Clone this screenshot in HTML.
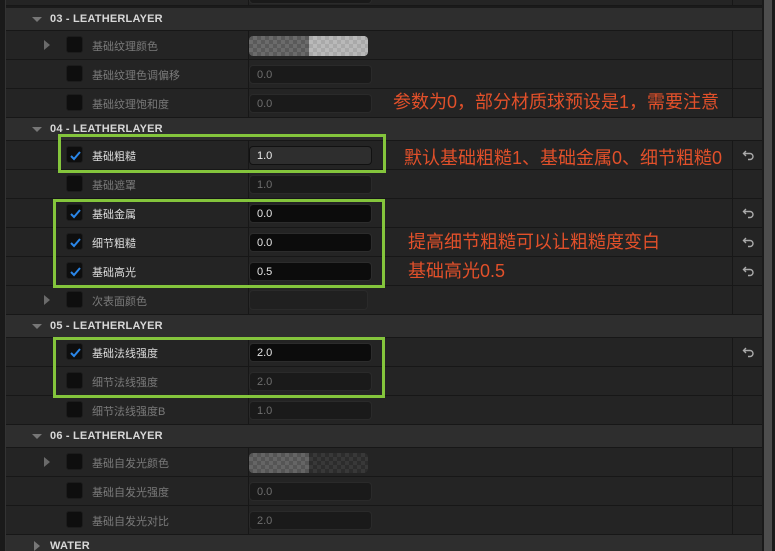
<!DOCTYPE html>
<html><head><meta charset="utf-8"><style>
*{margin:0;padding:0;box-sizing:border-box}
html,body{width:775px;height:551px;overflow:hidden}
body{background:#1a1a1a;position:relative;font-family:"Liberation Sans","Noto Sans CJK SC",sans-serif}
.a{position:absolute}
.row{position:absolute;left:6px;width:756px;height:29px;background:#242424;border-bottom:1px solid #171717}
.row .vd{position:absolute;left:242px;top:0;width:1px;height:100%;background:#171717}
.row .rd{position:absolute;left:726px;top:0;width:1px;height:100%;background:#171717}
.hdr{position:absolute;left:6px;width:756px;background:#2e2e2e;border-bottom:1px solid #171717;color:#d8d8d8;font-weight:bold;font-size:11px;letter-spacing:0.2px}
.hdr .t{position:absolute;left:44px;top:50%;transform:translateY(-50%)}
.tri{position:absolute;left:26px;top:50%;margin-top:-2px;width:0;height:0;border-left:5px solid transparent;border-right:5px solid transparent;border-top:5px solid #777}
.tr{position:absolute;left:38px;top:9px;width:0;height:0;border-top:5px solid transparent;border-bottom:5px solid transparent;border-left:6px solid #6a6a6a}
.cb{position:absolute;left:60px;top:5px;width:17px;height:17px;background:#0e0e0e;border-radius:3px;border:1px solid #1c1c1c}
.cb svg{position:absolute;left:2px;top:2px}
.lb{position:absolute;left:86px;top:7px;font-size:11px;color:#7a7a7a}
.lb.on{color:#dcdcdc}
.in{position:absolute;left:243px;top:5px;width:123px;height:19px;border-radius:4px;background:#1a1a1a;border:1px solid #2a2a2a;color:#6e6e6e;font-size:11px;padding:3px 0 0 7px}
.in.on{background:#0c0c0c;color:#e6e6e6;border-color:#2c2c2c}
.in.sel{background:#2e2e2e;border:1px solid #111;color:#eee}
.chk{position:absolute;left:243px;top:4px;width:120px;height:20px;border-radius:4px;overflow:hidden}
.undo{position:absolute;left:736px;top:8px}
.g{position:absolute;border:3px solid #84c53c}
.note{position:absolute;color:#e2502a;font-size:18px;font-family:"Liberation Sans","Noto Sans CJK SC",sans-serif;white-space:nowrap}
</style></head><body>
<div class="a" style="left:5px;top:0;width:1px;height:551px;background:#333"></div>
<div class="a" style="left:764px;top:0;width:8px;height:551px;background:#4d4d4d"></div>

<div class="row" style="top:-23px"><div class="vd"></div><div class="rd"></div><div class="in" style="left:243px;top:17px;height:10px"></div></div>

<div class="hdr" style="top:8px;height:23px"><div class="tri"></div><div class="t">03 - LEATHERLAYER</div></div>
<div class="row" style="top:31px"><div class="vd"></div><div class="rd"></div><div class="tr"></div><div class="cb"></div><div class="lb">基础纹理颜色</div>
<div class="chk" style="left:243px;top:5px;width:119px">
<div class="a" style="left:0;top:0;width:60px;height:20px;background-color:#5a5a5a;background-image:linear-gradient(45deg,#6b6b6b 25%,transparent 25%,transparent 75%,#6b6b6b 75%),linear-gradient(45deg,#6b6b6b 25%,transparent 25%,transparent 75%,#6b6b6b 75%);background-size:8px 8px;background-position:0 0,4px 4px"></div>
<div class="a" style="left:60px;top:0;width:60px;height:20px;background-color:#a9a9a9;background-image:linear-gradient(45deg,#b9b9b9 25%,transparent 25%,transparent 75%,#b9b9b9 75%),linear-gradient(45deg,#b9b9b9 25%,transparent 25%,transparent 75%,#b9b9b9 75%);background-size:8px 8px;background-position:0 0,4px 4px"></div>
</div></div>
<div class="row" style="top:60px"><div class="vd"></div><div class="rd"></div><div class="cb"></div><div class="lb">基础纹理色调偏移</div><div class="in">0.0</div></div>
<div class="row" style="top:89px"><div class="vd"></div><div class="rd"></div><div class="cb"></div><div class="lb">基础纹理饱和度</div><div class="in">0.0</div></div>

<div class="hdr" style="top:118px;height:23px"><div class="tri"></div><div class="t">04 - LEATHERLAYER</div></div>
<div class="row" style="top:141px"><div class="vd"></div><div class="rd"></div><div class="cb"><svg width="13" height="13" viewBox="0 0 13 13"><path d="M2 7l3 3 6-7" stroke="#2a86e8" stroke-width="2" fill="none"/></svg></div><div class="lb on">基础粗糙</div><div class="in sel">1.0</div><svg class="undo" width="14" height="12" viewBox="0 0 14 12"><path d="M4 2L1.5 4.5 4 7M2 4.5h6a3 3 0 0 1 0 6H6" stroke="#aaa" stroke-width="1.4" fill="none"/></svg></div>
<div class="row" style="top:170px"><div class="vd"></div><div class="rd"></div><div class="cb"></div><div class="lb">基础遮罩</div><div class="in">1.0</div></div>
<div class="row" style="top:199px"><div class="vd"></div><div class="rd"></div><div class="cb"><svg width="13" height="13" viewBox="0 0 13 13"><path d="M2 7l3 3 6-7" stroke="#2a86e8" stroke-width="2" fill="none"/></svg></div><div class="lb on">基础金属</div><div class="in on">0.0</div><svg class="undo" width="14" height="12" viewBox="0 0 14 12"><path d="M4 2L1.5 4.5 4 7M2 4.5h6a3 3 0 0 1 0 6H6" stroke="#aaa" stroke-width="1.4" fill="none"/></svg></div>
<div class="row" style="top:228px"><div class="vd"></div><div class="rd"></div><div class="cb"><svg width="13" height="13" viewBox="0 0 13 13"><path d="M2 7l3 3 6-7" stroke="#2a86e8" stroke-width="2" fill="none"/></svg></div><div class="lb on">细节粗糙</div><div class="in on">0.0</div><svg class="undo" width="14" height="12" viewBox="0 0 14 12"><path d="M4 2L1.5 4.5 4 7M2 4.5h6a3 3 0 0 1 0 6H6" stroke="#aaa" stroke-width="1.4" fill="none"/></svg></div>
<div class="row" style="top:257px"><div class="vd"></div><div class="rd"></div><div class="cb"><svg width="13" height="13" viewBox="0 0 13 13"><path d="M2 7l3 3 6-7" stroke="#2a86e8" stroke-width="2" fill="none"/></svg></div><div class="lb on">基础高光</div><div class="in on">0.5</div><svg class="undo" width="14" height="12" viewBox="0 0 14 12"><path d="M4 2L1.5 4.5 4 7M2 4.5h6a3 3 0 0 1 0 6H6" stroke="#aaa" stroke-width="1.4" fill="none"/></svg></div>
<div class="row" style="top:286px"><div class="vd"></div><div class="rd"></div><div class="tr"></div><div class="cb"></div><div class="lb">次表面颜色</div><div class="in" style="width:119px;height:20px;top:4px;background:#202020"></div></div>

<div class="hdr" style="top:315px;height:23px"><div class="tri"></div><div class="t">05 - LEATHERLAYER</div></div>
<div class="row" style="top:338px"><div class="vd"></div><div class="rd"></div><div class="cb"><svg width="13" height="13" viewBox="0 0 13 13"><path d="M2 7l3 3 6-7" stroke="#2a86e8" stroke-width="2" fill="none"/></svg></div><div class="lb on">基础法线强度</div><div class="in on">2.0</div><svg class="undo" width="14" height="12" viewBox="0 0 14 12"><path d="M4 2L1.5 4.5 4 7M2 4.5h6a3 3 0 0 1 0 6H6" stroke="#aaa" stroke-width="1.4" fill="none"/></svg></div>
<div class="row" style="top:367px"><div class="vd"></div><div class="rd"></div><div class="cb"></div><div class="lb">细节法线强度</div><div class="in">2.0</div></div>
<div class="row" style="top:396px"><div class="vd"></div><div class="rd"></div><div class="cb"></div><div class="lb">细节法线强度B</div><div class="in">1.0</div></div>

<div class="hdr" style="top:425px;height:23px"><div class="tri"></div><div class="t">06 - LEATHERLAYER</div></div>
<div class="row" style="top:448px"><div class="vd"></div><div class="rd"></div><div class="tr"></div><div class="cb"></div><div class="lb">基础自发光颜色</div>
<div class="chk" style="left:243px;top:5px;width:119px">
<div class="a" style="left:0;top:0;width:60px;height:20px;background-color:#555;background-image:linear-gradient(45deg,#656565 25%,transparent 25%,transparent 75%,#656565 75%),linear-gradient(45deg,#656565 25%,transparent 25%,transparent 75%,#656565 75%);background-size:8px 8px;background-position:0 0,4px 4px"></div>
<div class="a" style="left:60px;top:0;width:60px;height:20px;background-color:#2c2c2c;background-image:linear-gradient(45deg,#383838 25%,transparent 25%,transparent 75%,#383838 75%),linear-gradient(45deg,#383838 25%,transparent 25%,transparent 75%,#383838 75%);background-size:8px 8px;background-position:0 0,4px 4px"></div>
</div></div>
<div class="row" style="top:477px"><div class="vd"></div><div class="rd"></div><div class="cb"></div><div class="lb">基础自发光强度</div><div class="in">0.0</div></div>
<div class="row" style="top:506px"><div class="vd"></div><div class="rd"></div><div class="cb"></div><div class="lb">基础自发光对比</div><div class="in">2.0</div></div>
<div class="hdr" style="top:535px;height:23px"><div class="a" style="left:28px;top:6px;width:0;height:0;border-top:5px solid transparent;border-bottom:5px solid transparent;border-left:6px solid #777"></div><div class="t" style="top:11px">WATER</div></div>

<div class="g" style="left:58px;top:134px;width:328px;height:39px"></div>
<div class="g" style="left:53px;top:199px;width:332px;height:89px"></div>
<div class="g" style="left:53px;top:337px;width:332px;height:61px"></div>

<div class="note" style="left:393px;top:88px">参数为0，部分材质球预设是1，需要注意</div>
<div class="note" style="left:404px;top:144px">默认基础粗糙1、基础金属0、细节粗糙0</div>
<div class="note" style="left:408px;top:228px">提高细节粗糙可以让粗糙度变白</div>
<div class="note" style="left:408px;top:257px">基础高光0.5</div>
</body></html>
